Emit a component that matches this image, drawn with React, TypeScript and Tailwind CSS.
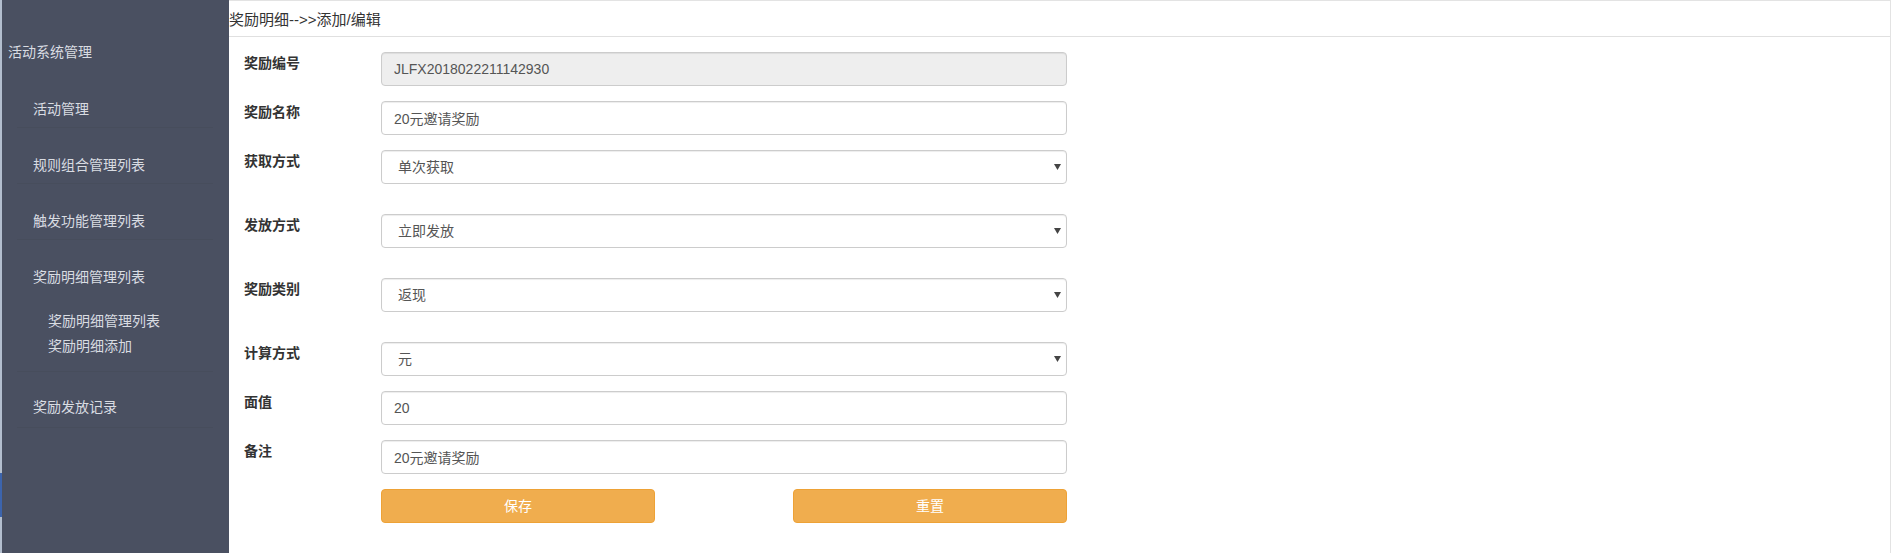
const font = { fontFamily: '"Liberation Sans", "Noto Sans CJK SC", sans-serif' };

type Field = { label: string; value: string; kind: "input" | "disabled" | "select"; gap: "mb-[15px]" | "mb-[30px]" };

const fields: Field[] = [
  { label: "奖励编号", value: "JLFX2018022211142930", kind: "disabled", gap: "mb-[15px]" },
  { label: "奖励名称", value: "20元邀请奖励", kind: "input", gap: "mb-[15px]" },
  { label: "获取方式", value: "单次获取", kind: "select", gap: "mb-[30px]" },
  { label: "发放方式", value: "立即发放", kind: "select", gap: "mb-[30px]" },
  { label: "奖励类别", value: "返现", kind: "select", gap: "mb-[30px]" },
  { label: "计算方式", value: "元", kind: "select", gap: "mb-[15px]" },
  { label: "面值", value: "20", kind: "input", gap: "mb-[15px]" },
  { label: "备注", value: "20元邀请奖励", kind: "input", gap: "mb-[15px]" },
];

const menu = ["活动管理", "规则组合管理列表", "触发功能管理列表"];

function Sidebar() {
  return (
    <div className="relative flex w-[229px] shrink-0 bg-[#4a5061] text-[14px] leading-5 text-[#d9dce2]">
      <div className="flex w-[2px] flex-col bg-[#b3bece]">
        <div className="h-[473px]" />
        <div className="h-[44px] bg-[#3c64ad]" />
      </div>
      <div className="flex-1">
        <div className="pl-[6px] pt-[42px] pb-[10px]">活动系统管理</div>
        <div className="ml-[15px] mr-[16px]">
          {menu.map((m) => (
            <div key={m} className="border-b border-[#474d5c] pl-4 pt-[27px] pb-[8px]">
              {m}
            </div>
          ))}
          <div className="border-b border-[#474d5c] pl-4 pt-[27px] pb-[12px]">
            <div>奖励明细管理列表</div>
            <div className="mt-[22px] pl-[15px] leading-[25px]">奖励明细管理列表</div>
            <div className="pl-[15px] leading-[25px]">奖励明细添加</div>
          </div>
          <div className="border-b border-[#474d5c] pl-4 pt-[25px] pb-[10px]">奖励发放记录</div>
        </div>
      </div>
    </div>
  );
}

function Control({ f }: { f: Field }) {
  const base =
    "h-[34px] w-[686px] rounded border border-[#cccccc] text-[14px] text-[#555555] shadow-[inset_0_1px_1px_rgba(0,0,0,0.075)] outline-none";
  if (f.kind === "select") {
    return (
      <div className="relative">
        <select
          className={base + " appearance-none bg-white pl-4"}
          style={font}
          defaultValue={f.value}
        >
          <option>{f.value}</option>
        </select>
        <svg className="pointer-events-none absolute right-[6px] top-[14px]" width="7" height="6" viewBox="0 0 7 6">
          <path d="M0 0 L7 0 L3.5 6 Z" fill="#444" />
        </svg>
      </div>
    );
  }
  return (
    <input
      className={base + " px-3 " + (f.kind === "disabled" ? "bg-[#eeeeee]" : "bg-white")}
      style={font}
      defaultValue={f.value}
      disabled={f.kind === "disabled"}
    />
  );
}

export default function App() {
  return (
    <div className="flex h-[553px] w-full overflow-hidden bg-white" style={font}>
      <Sidebar />
      <div className="flex-1 border-t border-r border-[#e3e3e3]">
        <div className="h-[36px] border-b border-[#e0e0e0] text-[15px] leading-[38px] text-[#333333]">
          奖励明细--&gt;&gt;添加/编辑
        </div>
        <div className="pl-[15px] pt-[15px]">
          {fields.map((f) => (
            <div key={f.label} className={"flex " + f.gap}>
              <div className="w-[137px] pt-px text-[14px] font-bold leading-5 text-[#333333]">{f.label}</div>
              <Control f={f} />
            </div>
          ))}
          <div className="flex">
            <div className="w-[137px]" />
            <div className="flex w-[686px] justify-between">
              <button className="h-[34px] w-[274px] rounded border border-[#eea236] bg-[#f0ad4e] text-[14px] text-white">
                保存
              </button>
              <button className="h-[34px] w-[274px] rounded border border-[#eea236] bg-[#f0ad4e] text-[14px] text-white">
                重置
              </button>
            </div>
          </div>
        </div>
      </div>
    </div>
  );
}
